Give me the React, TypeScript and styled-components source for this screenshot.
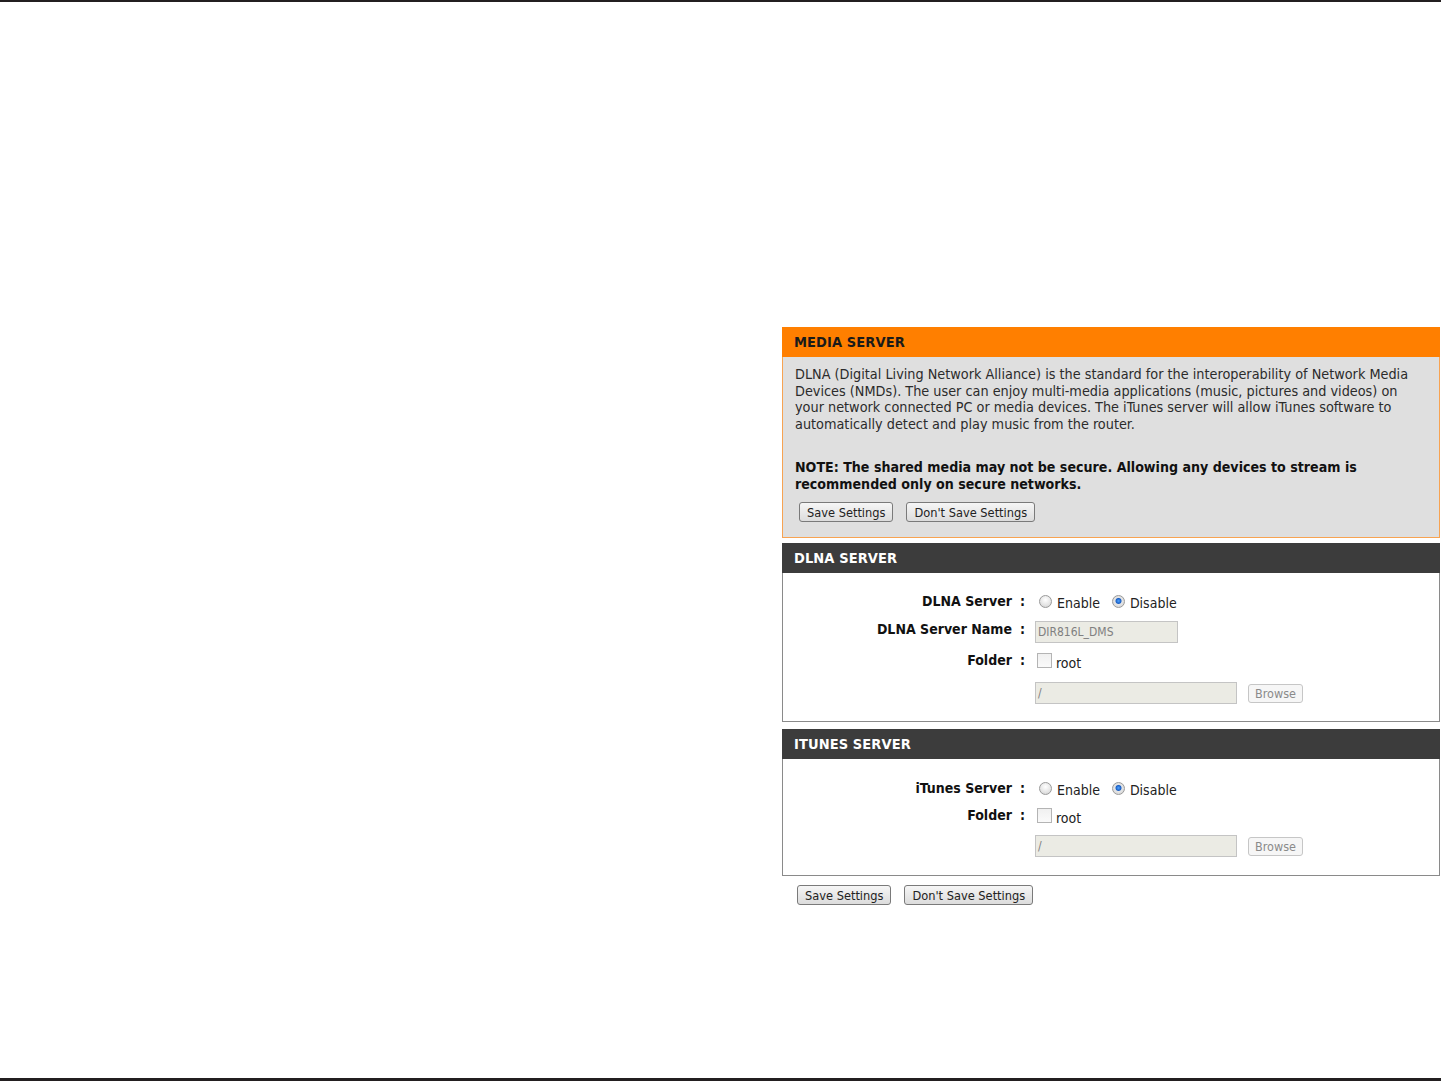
import * as React from 'react';
import styled, {createGlobalStyle} from 'styled-components';

const GlobalStyle = createGlobalStyle`
	html, body {
		margin: 0;
		padding: 0;
		background: #ffffff;
	}
	body {
		font-family: "DejaVu Sans Condensed", "DejaVu Sans", sans-serif;
		color: #222222;
	}
`;

const Page = styled.div`
	width: 1441px;
	height: 1081px;
	box-sizing: border-box;
	border-top: 2px solid #231f20;
	border-bottom: 3px solid #231f20;
	display: flex;
	justify-content: flex-end;
	padding-top: 325px;
`;

const Column = styled.div`
	width: 658px;
	margin-right: 1px;
	display: flex;
	flex-direction: column;
`;

const OrangeBox = styled.div`
	border: 1px solid #f7a352;
	border-top: none;
	background: #dfdfdf;
`;

const Header = styled.div<{$tone: 'orange' | 'dark'}>`
	height: 30px;
	display: flex;
	align-items: center;
	padding-left: 12px;
	font-size: 14.5px;
	font-weight: bold;
	letter-spacing: 0.1px;
	background: ${p => (p.$tone === 'orange' ? '#ff7f00' : '#3c3c3c')};
	color: ${p => (p.$tone === 'orange' ? '#1a1a1a' : '#ffffff')};
`;

const IntroBody = styled.div`
	padding: 9px 12px 15px 12px;
	font-size: 14.3px;
	line-height: 16.7px;
	color: #2b2b2b;
`;

const Para = styled.p`
	margin: 0 0 26px 0;
`;

const Note = styled.p`
	margin: 0 0 10px 0;
	font-weight: bold;
	font-size: 14.1px;
	color: #111111;
`;

const ButtonRow = styled.div<{$pad?: string}>`
	display: flex;
	gap: 13px;
	padding: ${p => p.$pad || '0 0 0 4px'};
`;

const Button = styled.button`
	height: 20px;
	padding: 0 7px;
	font-family: "DejaVu Sans Condensed", "DejaVu Sans", sans-serif;
	font-size: 12.7px;
	color: #222222;
	border: 1px solid #7a7a7a;
	border-radius: 3px;
	background: linear-gradient(#f6f6f6, #dcdcdc);
`;

const Section = styled.div<{$gap: number}>`
	margin-top: ${p => p.$gap}px;
`;

const SectionBody = styled.div<{$pad: string}>`
	border: 1px solid #8a8a8a;
	border-top: none;
	background: #ffffff;
	padding: ${p => p.$pad};
	display: flex;
	flex-direction: column;
`;

const FieldRow = styled.div<{$h: number}>`
	height: ${p => p.$h}px;
	display: grid;
	grid-template-columns: 242px 1fr;
	column-gap: 10px;
	align-items: center;
`;

const Label = styled.div`
	text-align: right;
	font-size: 14px;
	font-weight: bold;
	color: #111111;
	white-space: nowrap;
`;

const Colon = styled.span`
	margin-left: 8px;
`;

const Controls = styled.div`
	display: flex;
	align-items: center;
	font-size: 14px;
	color: #222222;
`;

const Radio = styled.span<{$on?: boolean}>`
	width: 13px;
	height: 13px;
	box-sizing: border-box;
	border-radius: 50%;
	border: 1px solid #9a9a9a;
	margin: 0 5px 0 4px;
	background: ${p =>
		p.$on
			? 'radial-gradient(circle at 50% 45%, #4fa3ff 0, #1a5fc4 2.5px, #e6e6e6 3.5px, #cfcfcf 100%)'
			: 'radial-gradient(circle at 50% 35%, #ffffff 0, #e4e4e4 60%, #cccccc 100%)'};
`;

const RadioText = styled.span`
	margin-right: 8px;
	padding-top: 3px;
`;

const Check = styled.span`
	width: 15px;
	height: 15px;
	box-sizing: border-box;
	border: 1px solid #b4b4b4;
	background: linear-gradient(#f0f0f0, #fafafa);
	margin: 0 4px 0 2px;
`;

const CheckText = styled.span`
	padding-top: 5px;
`;

const TextBox = styled.div<{$w: number; $top?: number}>`
	width: ${p => p.$w}px;
	height: 22px;
	margin-top: ${p => p.$top || 0}px;
	box-sizing: border-box;
	border: 1px solid #c4c4c4;
	background: #ebebe4;
	color: #808080;
	font-size: 12px;
	display: flex;
	align-items: center;
	padding-left: 2px;
`;

const Browse = styled.span`
	margin-left: 11px;
	height: 19px;
	box-sizing: border-box;
	padding: 0 6px;
	border: 1px solid #c6c6c6;
	border-radius: 3px;
	background: #f6f6f6;
	color: #8a8a8a;
	font-size: 12.5px;
	display: flex;
	align-items: center;
`;

function ServerToggle() {
	return (
		<Controls>
			<Radio/>
			<RadioText>Enable</RadioText>
			<Radio $on/>
			<RadioText>Disable</RadioText>
		</Controls>
	);
}

function FolderCheck() {
	return (
		<Controls>
			<Check/>
			<CheckText>root</CheckText>
		</Controls>
	);
}

function PathRow({h}: {h: number}) {
	return (
		<FieldRow $h={h}>
			<div/>
			<Controls>
				<TextBox $w={202}>/</TextBox>
				<Browse>Browse</Browse>
			</Controls>
		</FieldRow>
	);
}

export default function App() {
	return (
		<>
			<GlobalStyle/>
			<Page>
				<Column>
					<Header $tone="orange">MEDIA SERVER</Header>
					<OrangeBox>
						<IntroBody>
							<Para>
								DLNA (Digital Living Network Alliance) is the standard for the interoperability of Network Media
								Devices (NMDs). The user can enjoy multi-media applications (music, pictures and videos) on
								your network connected PC or media devices. The iTunes server will allow iTunes software to
								automatically detect and play music from the router.
							</Para>
							<Note>
								NOTE: The shared media may not be secure. Allowing any devices to stream is recommended only on
								secure networks.
							</Note>
							<ButtonRow>
								<Button>Save Settings</Button>
								<Button>Don't Save Settings</Button>
							</ButtonRow>
						</IntroBody>
					</OrangeBox>

					<Section $gap={5}>
						<Header $tone="dark">DLNA SERVER</Header>
						<SectionBody $pad="15px 0 13px 0">
							<FieldRow $h={26}>
								<Label>DLNA Server<Colon>:</Colon></Label>
								<ServerToggle/>
							</FieldRow>
							<FieldRow $h={28}>
								<Label>DLNA Server Name<Colon>:</Colon></Label>
								<Controls>
									<TextBox $w={143} $top={7}>DIR816L_DMS</TextBox>
								</Controls>
							</FieldRow>
							<FieldRow $h={36}>
								<Label>Folder<Colon>:</Colon></Label>
								<FolderCheck/>
							</FieldRow>
							<PathRow h={30}/>
						</SectionBody>
					</Section>

					<Section $gap={7}>
						<Header $tone="dark">ITUNES SERVER</Header>
						<SectionBody $pad="15px 0 11px 0">
							<FieldRow $h={28}>
								<Label>iTunes Server<Colon>:</Colon></Label>
								<ServerToggle/>
							</FieldRow>
							<FieldRow $h={26}>
								<Label>Folder<Colon>:</Colon></Label>
								<FolderCheck/>
							</FieldRow>
							<PathRow h={36}/>
						</SectionBody>
					</Section>

					<ButtonRow $pad="9px 0 0 15px">
						<Button>Save Settings</Button>
						<Button>Don't Save Settings</Button>
					</ButtonRow>
				</Column>
			</Page>
		</>
	);
}
